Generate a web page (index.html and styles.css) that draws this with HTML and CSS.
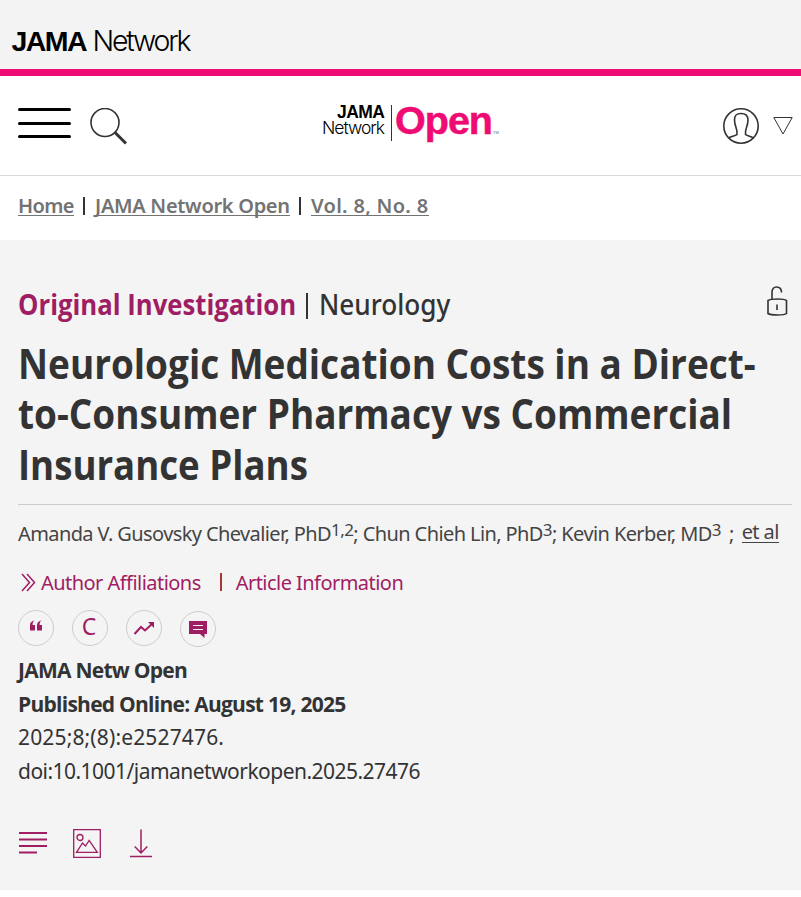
FILE: index.html
```html
<!DOCTYPE html>
<html lang="en">
<head>
    <meta charset="UTF-8">
    <meta name="viewport" content="width=device-width, initial-scale=1.0">
    <title>Neurologic Medication Costs in a Direct-to-Consumer Pharmacy vs Commercial Insurance Plans</title>
    <link rel="stylesheet" href="styles.css">
</head>
<body>
    <!-- Network bar -->
    <div class="network-bar">
        <svg class="network-logo" width="200" height="69" viewBox="0 0 200 69">
            <text x="11.500" y="50.500" class="logo-bold" font-size="28.5" textLength="76" lengthAdjust="spacing">JAMA</text>
            <text x="92.500" y="50.500" class="logo-light" font-size="28.5" textLength="99" lengthAdjust="spacing">Network</text>
        </svg>
    </div>

    <!-- Journal header -->
    <header class="journal-header">
        <div class="header-tools">
            <button class="icon-button" aria-label="Menu">
                <svg width="53" height="31" viewBox="0 0 53 31" stroke="#000" stroke-width="3" stroke-linecap="round">
                    <path d="M1.5 1.5H51.5M1.5 15.5H51.5M1.5 28.5H51.5"/>
                </svg>
            </button>
            <button class="icon-button" aria-label="Search">
                <svg width="38" height="38" viewBox="0 0 38 38" fill="none" stroke="#333">
                    <circle cx="15" cy="14.500" r="14" stroke-width="1.600"/>
                    <path d="M25 24.500L36 35.500" stroke-width="3"/>
                </svg>
            </button>
        </div>
        <a class="journal-logo" href="#">
            <svg width="180" height="44" viewBox="0 0 180 44">
                <text x="15" y="17" class="logo-bold" font-size="17.500" textLength="48" lengthAdjust="spacing">JAMA</text>
                <text x="0" y="33" class="logo-light" font-size="17.500" textLength="63" lengthAdjust="spacing">Network</text>
                <path d="M69.500 4V40" stroke="#333" stroke-width="1"/>
                <text x="73" y="33" class="logo-open" font-size="39.500" textLength="98" lengthAdjust="spacing">Open</text>
                <text x="171" y="33" class="logo-tm" font-size="4">TM</text>
            </svg>
        </a>
        <div class="header-account">
            <svg width="36" height="37" viewBox="0 0 36 37" fill="none" stroke="#333" stroke-width="1.600">
                <circle cx="18" cy="18" r="17.200"/>
                <path d="M5.500 30C8 28 13 27.800 14 26.500C15 21.500 11.500 18.500 11.500 12C11.500 6.500 14 5.500 18 5.500S25 6.500 25 12C25 18.500 21.500 21.500 22.500 26.500C23.500 27.800 28 28 30.500 30"/>
            </svg>
            <svg width="20" height="18" viewBox="0 0 20 18" fill="none" stroke="#333">
                <path d="M0.800 0.500H19.200L10 17Z"/>
            </svg>
        </div>
    </header>

    <nav class="breadcrumbs">
        <a class="crumb-home" href="#">Home</a><span class="divider"></span><a class="crumb-journal" href="#">JAMA Network Open</a><span class="divider"></span><a class="crumb-volume" href="#">Vol. 8, No. 8</a>
    </nav>

    <main class="article">
        <div class="article-top">
            <div class="article-type"><span class="type-name">Original Investigation</span><span class="type-divider"></span><span class="type-topic">Neurology</span></div>
            <svg class="open-access" width="21" height="31" viewBox="0 0 21 31" fill="none" stroke="#333" stroke-width="1.600">
                <path d="M5 13V6.500C5 2.500 7 1 9.500 1S14.500 2.500 14.500 6.500"/>
                <path d="M1 14.500C4 12.500 17 12.500 19.500 14.500V27.500C17 29.500 4 29.500 1 27.500Z"/>
                <path d="M10 18.500V24"/>
            </svg>
        </div>

        <h1 class="article-title"><span class="title-line">Neurologic Medication Costs in a Direct-</span><span class="title-line">to-Consumer Pharmacy vs Commercial</span><span class="title-line">Insurance Plans</span></h1>

        <div class="authors"><span class="author">Amanda V. Gusovsky Chevalier, PhD<sup>1,2</sup>; </span><span class="author">Chun Chieh Lin, PhD<sup>3</sup>; </span><span class="author">Kevin Kerber, MD<sup>3</sup></span><span class="author-end">;</span><a class="et-al" href="#">et al</a></div>

        <div class="author-links">
            <svg width="16" height="19" viewBox="0 0 16 19" fill="none" stroke="#9f1d63" stroke-width="1.500">
                <path d="M1 1L8.500 9.500L1 18M6 1L13.500 9.500L6 18"/>
            </svg>
            <a class="affiliations" href="#">Author Affiliations</a>
            <span class="link-divider"></span>
            <a class="information" href="#">Article Information</a>
        </div>

        <div class="round-buttons">
            <a class="round-button" href="#" aria-label="Cite">
                <svg class="quote" width="12" height="12" viewBox="0 0 12 12" fill="#9f1d63">
                    <path d="M4.500 0.500C3 1.500 2.600 3 2.600 5H5V10.500H0V5C0 2.500 2 1 4.500 0.500Z"/>
                    <path d="M11.500 0.500C10 1.500 9.600 3 9.600 5H12V10.500H7V5C7 2.500 9 1 11.500 0.500Z"/>
                </svg>
            </a>
            <a class="round-button permissions" href="#">C</a>
            <a class="round-button" href="#" aria-label="Metrics">
                <svg width="22" height="14" viewBox="0 0 22 14" fill="none" stroke="#9f1d63" stroke-width="2">
                    <path d="M1.500 13L8 6L12 9.500L19 3"/>
                    <path d="M15 1H21V7Z" fill="#9f1d63" stroke="none"/>
                </svg>
            </a>
            <a class="round-button comments" href="#" aria-label="Comments">
                <svg width="18" height="17" viewBox="0 0 18 17">
                    <path d="M0 0H18V13H15.500V17L11 13H0Z" fill="#9f1d63"/>
                    <path d="M4 4.500H14M4 8.500H14" stroke="#f3f3f3"/>
                </svg>
            </a>
        </div>

        <div class="citation">
            <div class="cite-journal">JAMA Netw Open</div>
            <div class="cite-date">Published Online: August 19, 2025</div>
            <div class="cite-issue">2025;8;(8):e2527476.</div>
            <div class="cite-doi">doi:10.1001/jamanetworkopen.2025.27476</div>
        </div>

        <div class="article-tools">
            <svg width="28" height="28" viewBox="0 0 28 28" stroke="#9f1d63" stroke-width="2">
                <path d="M0 4H28M0 10.500H28M0 17H28M0 23.500H18"/>
            </svg>
            <svg width="28" height="29" viewBox="0 0 28 29" fill="none" stroke="#9f1d63" stroke-width="1.300">
                <path d="M0.700 0.700H27.300V28.300H0.700Z"/>
                <circle cx="7" cy="8.500" r="3"/>
                <path d="M3.500 23.300L9.500 14L12.500 17L16.200 11.500L24.300 23.300Z"/>
            </svg>
            <svg class="download" width="22" height="29" viewBox="0 0 22 29" fill="none" stroke="#9f1d63" stroke-width="1.500">
                <path d="M11 0.500V24M4.700 17.500L11 24L17.300 17.500M0 27.500H22"/>
            </svg>
        </div>
    </main>
</body>
</html>
```
FILE: styles.css
```css
:root {
    --brand-pink: #ef0b74;
    --link-plum: #9f1d63;
    --text-primary: #333333;
    --text-muted: #737373;
    --panel: #f4f4f4;
    --rule: #cccccc;
}

* {
    margin: 0;
    padding: 0;
    box-sizing: border-box;
}

body {
    background: #fff;
    color: var(--text-primary);
    font-family: "Noto Sans", "Open Sans", sans-serif;
}

a {
    color: inherit;
    text-decoration: none;
}

svg {
    display: block;
    flex: none;
}

.network-bar {
    height: 76px;
    background: #f3f3f3;
    border-bottom: 7px solid var(--brand-pink);
}

.logo-bold,
.logo-light,
.logo-open,
.logo-tm {
    font-family: "Liberation Sans", Arial, sans-serif;
}

.logo-bold {
    font-weight: 700;
}

.logo-light {
    font-family: Inter, "Liberation Sans", sans-serif;
    font-weight: 300;
}

.logo-open {
    font-weight: 700;
    fill: var(--brand-pink);
    stroke: var(--brand-pink);
    stroke-width: 0.5px;
}

.logo-tm {
    fill: #666;
}

.journal-header {
    display: flex;
    justify-content: space-between;
    height: 100px;
    padding: 0 8px 0 18px;
    border-bottom: 1px solid #d9d9d9;
}

.header-tools {
    display: flex;
    align-items: flex-start;
    gap: 19px;
    width: 304px;
    padding-top: 32px;
}

.icon-button {
    background: none;
    border: none;
    cursor: pointer;
}

.journal-logo {
    padding-top: 25px;
}

.header-account {
    display: flex;
    justify-content: flex-end;
    gap: 14px;
    width: 291px;
    padding-top: 32px;
}

.header-account svg:last-child {
    margin-top: 9px;
}

.breadcrumbs {
    display: flex;
    align-items: flex-start;
    height: 64px;
    padding: 17px 18px 0;
    font-size: 20px;
    font-weight: 600;
    line-height: 26px;
    white-space: nowrap;
    color: var(--text-muted);
}

.breadcrumbs a {
    height: 23px;
    border-bottom: 1px solid var(--text-muted);
}

.crumb-home {
    width: 56px;
    letter-spacing: -0.6px;
}

.crumb-journal {
    width: 195px;
    letter-spacing: -0.3px;
}

.crumb-volume {
    width: 118px;
    letter-spacing: 0.3px;
}

.divider {
    width: 2px;
    height: 18px;
    margin: 4px 10px 0 9px;
    background: var(--text-primary);
}

.article {
    height: 650px;
    padding: 46px 9px 0 18px;
    background: var(--panel);
}

.article-top {
    display: flex;
    justify-content: space-between;
    height: 52px;
}

.article-type {
    display: flex;
    font-size: 28px;
    line-height: 37px;
    white-space: nowrap;
}

/* Headings are set slightly condensed, the widths are those of the condensed text */
.type-name {
    width: 278px;
    font-family: "Open Sans", sans-serif;
    font-weight: 700;
    color: var(--link-plum);
    transform: scaleX(0.918);
    transform-origin: left;
}

.type-divider {
    flex: none;
    width: 2px;
    height: 26px;
    margin: 7px 11px 0 10px;
    background: #333;
}

.type-topic {
    width: 131px;
    font-weight: 500;
    transform: scaleX(0.935);
    transform-origin: left;
}

.open-access {
    margin-right: 4px;
}

.article-title {
    height: 167px;
    border-bottom: 1px solid var(--rule);
    font-family: "Open Sans", sans-serif;
    font-size: 42px;
    font-weight: 700;
    line-height: 50.400px;
}

.title-line {
    display: block;
    width: 740px;
    white-space: nowrap;
    transform: scaleX(0.88);
    transform-origin: left;
}

.title-line:last-child {
    transform: scaleX(0.872);
}

.authors {
    display: flex;
    height: 58px;
    padding-top: 14px;
    font-size: 20px;
    line-height: 30px;
    letter-spacing: -0.6px;
    white-space: pre;
    color: #444;
}

.authors sup {
    font-size: 17px;
    line-height: 0;
    vertical-align: 5px;
}

.author-end {
    margin: 0 8px;
}

.et-al {
    height: 24px;
    border-bottom: 1px solid #444;
    line-height: 26px;
}

.author-links {
    display: flex;
    align-items: center;
    height: 38px;
    margin-bottom: 2px;
    padding-left: 3px;
    font-size: 20px;
    letter-spacing: -0.54px;
    color: var(--link-plum);
}

.affiliations {
    margin-left: 4px;
}

.link-divider {
    width: 2px;
    height: 18px;
    margin: 0 14px 0 19px;
    background: #a33;
}

.round-buttons {
    display: flex;
    gap: 18px;
    height: 51px;
    padding-top: 7px;
}

.round-button {
    display: flex;
    align-items: center;
    justify-content: center;
    width: 36px;
    height: 36px;
    border: 1px solid var(--rule);
    border-radius: 50%;
}

.quote {
    margin-bottom: 4px;
}

.permissions {
    padding: 0 2px 5px 0;
    font-size: 23px;
    font-weight: 400;
    color: var(--link-plum);
}

.comments {
    margin-top: 1px;
}

.citation {
    height: 175px;
    font-size: 21px;
    line-height: 33.600px;
}

.cite-journal,
.cite-date {
    font-family: "Open Sans", sans-serif;
    font-weight: 700;
    letter-spacing: -0.74px;
}

.cite-issue {
    letter-spacing: 0.15px;
}

.cite-doi {
    letter-spacing: -0.53px;
}

.article-tools {
    display: flex;
    padding-left: 1px;
    gap: 26px;
}

.download {
    margin-left: 3px;
}
```
